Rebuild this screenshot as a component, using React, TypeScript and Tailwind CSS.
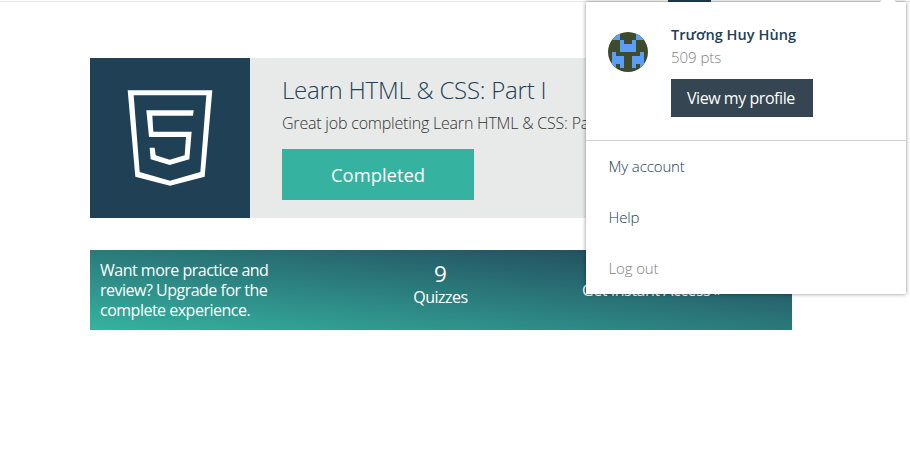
function CourseLogo() {
  return (
    <svg className="size-40 shrink-0 bg-[#204056]" viewBox="0 24 480 480" fill="#fff" fillRule="evenodd">
      <path d="M113 121H367L344 380L240 407L136 380ZM131 136L149 366L240 392L331 366L349 136Z" />
      <path d="M169 181H311L309 197H187L190 245H305L298 328L239 345L182 328L179 293H194L197 316L239 329L284 316L288 261H177Z" />
    </svg>
  );
}

function Avatar() {
  return (
    <svg className="size-10 shrink-0 rounded-full bg-[#3f4b2d]" viewBox="0 0 10 10" fill="#5a9ff5" shapeRendering="crispEdges">
      <path d="M0 0H3V2H0ZM7 0H10V2H7ZM3 2H4V3H6V2H7V5H3ZM1 5H2V6H4V9H3V8H2V9H1ZM9 5H8V6H6V9H7V8H8V9H9Z" />
    </svg>
  );
}

function AccountMenu() {
  return (
    <div className="absolute left-[586px] top-0.5 h-[292px] w-80 bg-white shadow-[0_0_4px_rgba(0,0,0,0.45)]">
      <div className="absolute -top-0.5 left-[294px] h-0.5 w-4 bg-white [clip-path:polygon(12%_0,88%_0,100%_100%,0_100%)]" />
      <div className="flex h-[139px] border-b border-[#d0d0d0] pl-[22px] pt-[30px]">
        <Avatar />
        <div className="-mt-2 ml-[23px] flex flex-col items-start whitespace-nowrap">
          <div className="text-[14.5px] font-semibold leading-[22px] tracking-[0.07px] text-[#204056]">Trương Huy Hùng</div>
          <div className="text-[15px] font-light leading-[22px] tracking-[-0.05px] text-[#808080]">509 pts</div>
          <div className="mt-[11px] h-[38px] w-[142px] bg-[#354551] pl-4 text-[16px] leading-[38px] tracking-[-0.45px] text-white">View my profile</div>
        </div>
      </div>
      <nav className="flex flex-col pl-[22.5px] text-[15px] font-light leading-[51px] tracking-[-0.12px] text-[#204056]">
        <a>My account</a>
        <a>Help</a>
        <a className="text-[#808080]">Log out</a>
      </nav>
    </div>
  );
}

export default function App() {
  return (
    <div className="relative h-[460px] w-[910px] overflow-hidden bg-white font-['Open_Sans','Noto_Sans',sans-serif]">
      <header className="flex h-0.5 border-b border-[#e7e7e7] pl-[668px]">
        <div className="h-0.5 w-[43px] bg-[#204056]" />
      </header>
      <main className="ml-[90px] w-[702px] pt-14">
        <section className="flex h-40 overflow-hidden bg-[#e8eae9]">
          <CourseLogo />
          <div className="ml-8 whitespace-nowrap pt-4">
            <h1 className="text-[24px] font-light leading-8 tracking-[-0.23px] text-[#204056]">Learn HTML &amp; CSS: Part I</h1>
            <p className="mt-[5px] text-[16px] font-light leading-6 tracking-[-0.2px] text-[#333]">Great job completing Learn HTML &amp; CSS: Part I</p>
            <div className="mt-[14px] h-[51px] w-48 bg-[#35b3a0] text-center text-[18.4px] leading-[52px] text-white">Completed</div>
          </div>
        </section>
        <section className="mt-8 flex h-20 whitespace-nowrap bg-linear-to-tr/srgb from-[#35b3a0] to-[#204056] text-[16px] leading-5 tracking-[-0.5px] text-white">
          <div className="w-[280px] pl-[10px] pt-[10px]">
            <div>Want more practice and</div>
            <div>review? Upgrade for the</div>
            <div>complete experience.</div>
          </div>
          <div className="w-[141px] pt-[10px] text-center">
            <div className="text-[22.5px] leading-[27px] tracking-normal">9</div>
            <div>Quizzes</div>
          </div>
          <div className="flex-1 pl-[71px] pt-[30px] tracking-[-0.45px]">Get Instant Access »</div>
        </section>
      </main>
      <AccountMenu />
    </div>
  );
}
